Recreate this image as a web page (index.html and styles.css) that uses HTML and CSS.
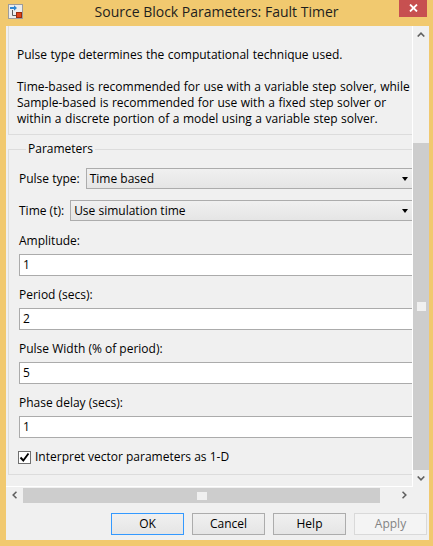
FILE: index.html
```html
<!DOCTYPE html>
<html>
<head>
<meta charset="utf-8">
<link rel="stylesheet" href="styles.css">
</head>
<body>
<div class="window">
  <div class="titlebar">
    <div class="tb-left">
      <svg class="app-icon" width="15" height="15" viewBox="0 0 15 15">
        <rect x="0.5" y="0.5" width="14" height="14" fill="#ECECEC" stroke="#9C9C9C"/>
        <path d="M4.5 6v5.5h4" stroke="#5A5A5A" fill="none"/>
        <path d="M2 3h4V1.2L9 4 6 6.8V5H2z" fill="#2E86D1"/>
        <rect x="8.5" y="8.5" width="5" height="5" fill="#E0431A" stroke="#9A2A0C"/>
      </svg>
    </div>
    <div class="title">Source Block Parameters: Fault Timer</div>
    <div class="tb-right">
      <div class="close">
        <svg width="9" height="8" viewBox="0 0 9 8"><path d="M1 0.5l7 7M8 0.5l-7 7" stroke="#fff" stroke-width="1.8"/></svg>
      </div>
    </div>
  </div>
  <div class="client">
    <div class="scrollarea">
      <div class="viewport">
        <div class="content">
          <div class="desc">Pulse type determines the computational technique used.<br><br>Time-based is recommended for use with a variable step solver, while<br>Sample-based is recommended for use with a fixed step solver or<br>within a discrete portion of a model using a variable step solver.</div>
          <fieldset class="params">
            <legend>Parameters</legend>
            <div class="select-row">
              <span class="label">Pulse type:</span>
              <div class="combo"><span class="combo-text">Time based</span><span class="combo-arrow"></span></div>
            </div>
            <div class="select-row">
              <span class="label">Time (t):</span>
              <div class="combo"><span class="combo-text">Use simulation time</span><span class="combo-arrow"></span></div>
            </div>
            <div class="field">
              <div class="label">Amplitude:</div>
              <div class="edit">1</div>
            </div>
            <div class="field">
              <div class="label">Period (secs):</div>
              <div class="edit">2</div>
            </div>
            <div class="field">
              <div class="label">Pulse Width (% of period):</div>
              <div class="edit">5</div>
            </div>
            <div class="field">
              <div class="label">Phase delay (secs):</div>
              <div class="edit">1</div>
            </div>
            <div class="check-row">
              <span class="checkbox"><svg width="11" height="11" viewBox="0 0 11 11"><path d="M1.5 5.5l2.8 3L9.5 1.5" stroke="#000" stroke-width="1.9" fill="none"/></svg></span>
              <span class="label">Interpret vector parameters as 1-D</span>
            </div>
          </fieldset>
        </div>
      </div>
      <div class="vscroll">
        <div class="arrow-btn"><svg width="8" height="5" viewBox="0 0 8 5"><path d="M0.7 4.5L4 1.2l3.3 3.3" stroke="#606060" stroke-width="1.6" fill="none"/></svg></div>
        <div class="vtrack"><div class="vthumb"><span class="grip"></span></div></div>
        <div class="arrow-btn"><svg width="8" height="5" viewBox="0 0 8 5"><path d="M0.7 0.5L4 3.8l3.3-3.3" stroke="#606060" stroke-width="1.6" fill="none"/></svg></div>
      </div>
      <div class="hscroll">
        <div class="arrow-btn"><svg width="5" height="8" viewBox="0 0 5 8"><path d="M4.5 0.7L1.2 4l3.3 3.3" stroke="#606060" stroke-width="1.6" fill="none"/></svg></div>
        <div class="htrack"><div class="hthumb"><span class="grip"></span></div></div>
        <div class="arrow-btn"><svg width="5" height="8" viewBox="0 0 5 8"><path d="M0.5 0.7L3.8 4 0.5 7.3" stroke="#606060" stroke-width="1.6" fill="none"/></svg></div>
      </div>
      <div class="corner"></div>
    </div>
    <div class="buttons">
      <div class="btn default">OK</div>
      <div class="btn">Cancel</div>
      <div class="btn">Help</div>
      <div class="btn disabled">Apply</div>
    </div>
  </div>
</div>
</body>
</html>
```

FILE: styles.css
```css
* { box-sizing: border-box; }
html, body { margin: 0; padding: 0; }
body {
  background: #F1C96F;
  font-family: "Open Sans", "Liberation Sans", sans-serif;
  font-size: 12px;
  color: #000;
}
.window {
  width: 433px;
  height: 546px;
  background: #F1C96F;
  display: flex;
  flex-direction: column;
  overflow: hidden;
}
.titlebar {
  height: 26px;
  flex: none;
  display: grid;
  grid-template-columns: 1fr auto 1fr;
  align-items: start;
}
.tb-left { padding: 4px 0 0 8px; }
.app-icon { display: block; }
.title {
  font-size: 14px;
  line-height: 24px;
  color: #1E1E1E;
  white-space: nowrap;
}
.tb-right { display: flex; justify-content: flex-end; padding-right: 6px; }
.close {
  width: 28px;
  height: 17px;
  background: #C75050;
  display: flex;
  align-items: center;
  justify-content: center;
}
.close svg { display: block; margin-top: -2px; }
.client {
  flex: 1;
  margin: 0 4px 6px 6px;
  background: #F0F0F0;
  display: flex;
  flex-direction: column;
}
.scrollarea {
  display: grid;
  grid-template-columns: 407px 16px;
  grid-template-rows: 461px 16px;
}
.viewport {
  overflow: hidden;
  border-right: 1px solid #FFFFFF;
  border-bottom: 1px solid #FFFFFF;
}
.content {
  width: 422px;
  padding-left: 2px;
}
.desc {
  width: 418px;
  border: 1px solid #DCDCDC;
  border-top: none;
  padding: 21px 8px 7px 8px;
  line-height: 16px;
  white-space: nowrap;
  word-spacing: 0.4px;
}
.params {
  width: 418px;
  margin: 6px 0 0 0;
  padding: 11px 10px 9px 10px;
  border: 1px solid #DCDCDC;
  min-width: 0;
}
.params legend {
  padding: 0 2px;
  margin-left: 7px;
  line-height: 16px;
}
.label { line-height: 16px; white-space: nowrap; }
.select-row {
  display: flex;
  align-items: center;
  gap: 6px;
  margin-bottom: 11px;
}
.select-row + .select-row { margin-bottom: 12px; }
.combo {
  flex: 1;
  height: 21px;
  border: 1px solid #ACACAC;
  background: linear-gradient(#F0F0F0, #E5E5E5);
  display: flex;
  align-items: center;
  padding: 0 6px 0 3px;
}
.combo-text { flex: 1; white-space: nowrap; }
.combo-arrow {
  width: 0; height: 0;
  border-left: 3.5px solid transparent;
  border-right: 3.5px solid transparent;
  border-top: 4px solid #000;
}
.field { margin-bottom: 11px; }
.field .label { margin-bottom: 5px; }
.edit {
  height: 22px;
  border: 1px solid #ABABAB;
  background: #FFFFFF;
  line-height: 20px;
  padding-left: 3px;
}
.check-row {
  display: flex;
  align-items: center;
  gap: 4px;
  margin: 0 0 0 -1px;
}
.checkbox {
  width: 13px;
  height: 13px;
  border: 1px solid #707070;
  background: #FFFFFF;
  display: flex;
  align-items: center;
  justify-content: center;
}
.checkbox svg { display: block; }
.vscroll {
  display: flex;
  flex-direction: column;
  background: #F0F0F0;
}
.vscroll .arrow-btn {
  height: 17px;
  display: flex;
  align-items: center;
  justify-content: center;
}
.vtrack {
  flex: 1;
  display: flex;
  flex-direction: column;
  justify-content: flex-end;
}
.vthumb {
  height: 327px;
  background: #CDCDCD;
  display: flex;
  align-items: center;
  justify-content: center;
}
.vthumb .grip { width: 9px; height: 9px; background: #F0F0F0; }
.hscroll {
  display: flex;
  background: #F0F0F0;
}
.hscroll .arrow-btn {
  width: 17px;
  display: flex;
  align-items: center;
  justify-content: center;
}
.htrack { flex: 1; display: flex; }
.hthumb {
  width: 357px;
  margin-top: 1px;
  background: #CDCDCD;
  display: flex;
  align-items: center;
  justify-content: center;
}
.hthumb .grip { width: 10px; height: 8px; background: #F0F0F0; }
.corner { background: #F0F0F0; }
.buttons {
  display: flex;
  justify-content: flex-end;
  gap: 8px;
  padding: 10px 2px 0 0;
}
.btn {
  width: 73px;
  height: 22px;
  border: 1px solid #ACACAC;
  background: linear-gradient(#F0F0F0, #E5E5E5);
  text-align: center;
  line-height: 20px;
}
.btn.default { border-color: #3399FF; }
.btn.disabled {
  border-color: #D9D9D9;
  background: #F4F4F4;
  color: #838383;
}
```
